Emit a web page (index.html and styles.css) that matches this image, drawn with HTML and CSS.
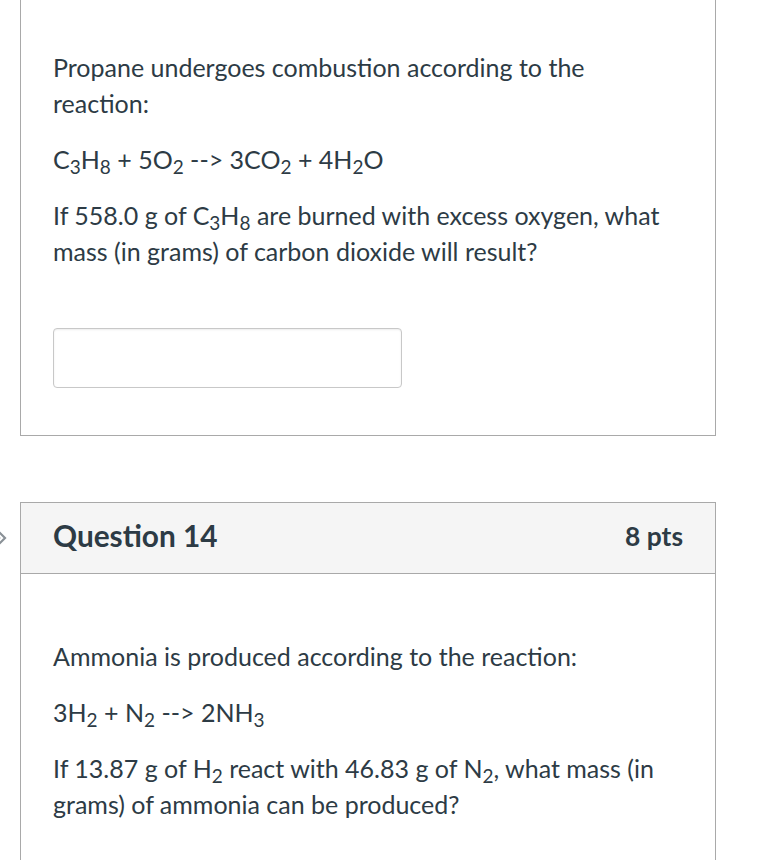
FILE: index.html
```html
<!DOCTYPE html>
<html>
<head>
<meta charset="utf-8">
<link rel="stylesheet" href="styles.css">
</head>
<body>
<div class="page">
  <div class="card card-first">
    <div class="q-text q-text-first">
      <p>Propane undergoes combustion according to the reaction:</p>
      <p>C<sub>3</sub>H<sub>8</sub> + 5O<sub>2</sub> --&gt; 3CO<sub>2</sub> + 4H<sub>2</sub>O</p>
      <p>If 558.0 g of C<sub>3</sub>H<sub>8</sub> are burned with excess oxygen, what mass (in grams) of carbon dioxide will result?</p>
      <div class="answer"><input class="answer-input" type="text" aria-label="answer"></div>
    </div>
  </div>

  <div class="card card-second">
    <svg class="flag-marker" width="8" height="24" viewBox="0 0 8 24" aria-hidden="true">
      <path d="M-4 3 L5 12 L-4 21" fill="none" stroke="#8a9197" stroke-width="2.2"/>
      <path d="M-6 6 L0 12 L-6 18" fill="none" stroke="#c3c8cc" stroke-width="1.5"/>
    </svg>
    <div class="q-header">
      <h2 class="q-title">Question 14</h2>
      <span class="q-points">8 pts</span>
    </div>
    <div class="q-text q-text-second">
      <p>Ammonia is produced according to the reaction:</p>
      <p>3H<sub>2</sub> + N<sub>2</sub> --&gt; 2NH<sub>3</sub></p>
      <p>If 13.87 g of H<sub>2</sub> react with 46.83 g of N<sub>2</sub>, what mass (in grams) of ammonia can be produced?</p>
    </div>
  </div>
</div>
</body>
</html>
```

FILE: styles.css
```css
html, body {
  margin: 0;
  padding: 0;
  background: #ffffff;
}

body {
  font-family: Lato, "Open Sans", "Liberation Sans", sans-serif;
  color: #2d3b45;
  overflow: hidden;
}

.page {
  width: 696px;
  padding-left: 20px;
}

.card {
  position: relative;
  border: 1px solid #a9a9a9;
  background: #ffffff;
}

.card-first {
  border-top: none;
}

.card-second {
  margin-top: 66px;
}

.q-text {
  padding: 0 32px;
  font-size: 25px;
  line-height: 36px;
}

.q-text p {
  margin: 0 0 20px;
}

.q-text sub {
  font-size: 0.76em;
  line-height: 1;
  vertical-align: -0.28em;
}

.q-text-first {
  padding-top: 49px;
  padding-bottom: 47px;
}

.q-text-first p:last-of-type {
  margin-bottom: 0;
}

.answer {
  margin-top: 59px;
  display: flex;
}

.answer-input {
  width: 349px;
  height: 60px;
  box-sizing: border-box;
  border: 1px solid #c8c8c8;
  border-radius: 4px;
  box-shadow: inset 0 1px 2px rgba(0, 0, 0, 0.08);
  background: #fff;
  margin: 0;
  padding: 0 10px;
}

.q-header {
  display: flex;
  align-items: center;
  justify-content: space-between;
  height: 71px;
  box-sizing: border-box;
  padding: 0 32px 4px;
  background: #f5f5f5;
  border-bottom: 1px solid #a9a9a9;
}

.q-title {
  margin: 0;
  font-size: 29.8px;
  font-weight: 700;
  color: #2d3b45;
  line-height: 1;
}

.q-points {
  font-size: 26.4px;
  font-weight: 700;
  color: #2d3b45;
  line-height: 1;
}

.q-text-second {
  padding-top: 64px;
  padding-bottom: 40px;
}

.flag-marker {
  position: absolute;
  left: -21px;
  top: 23px;
}
```
